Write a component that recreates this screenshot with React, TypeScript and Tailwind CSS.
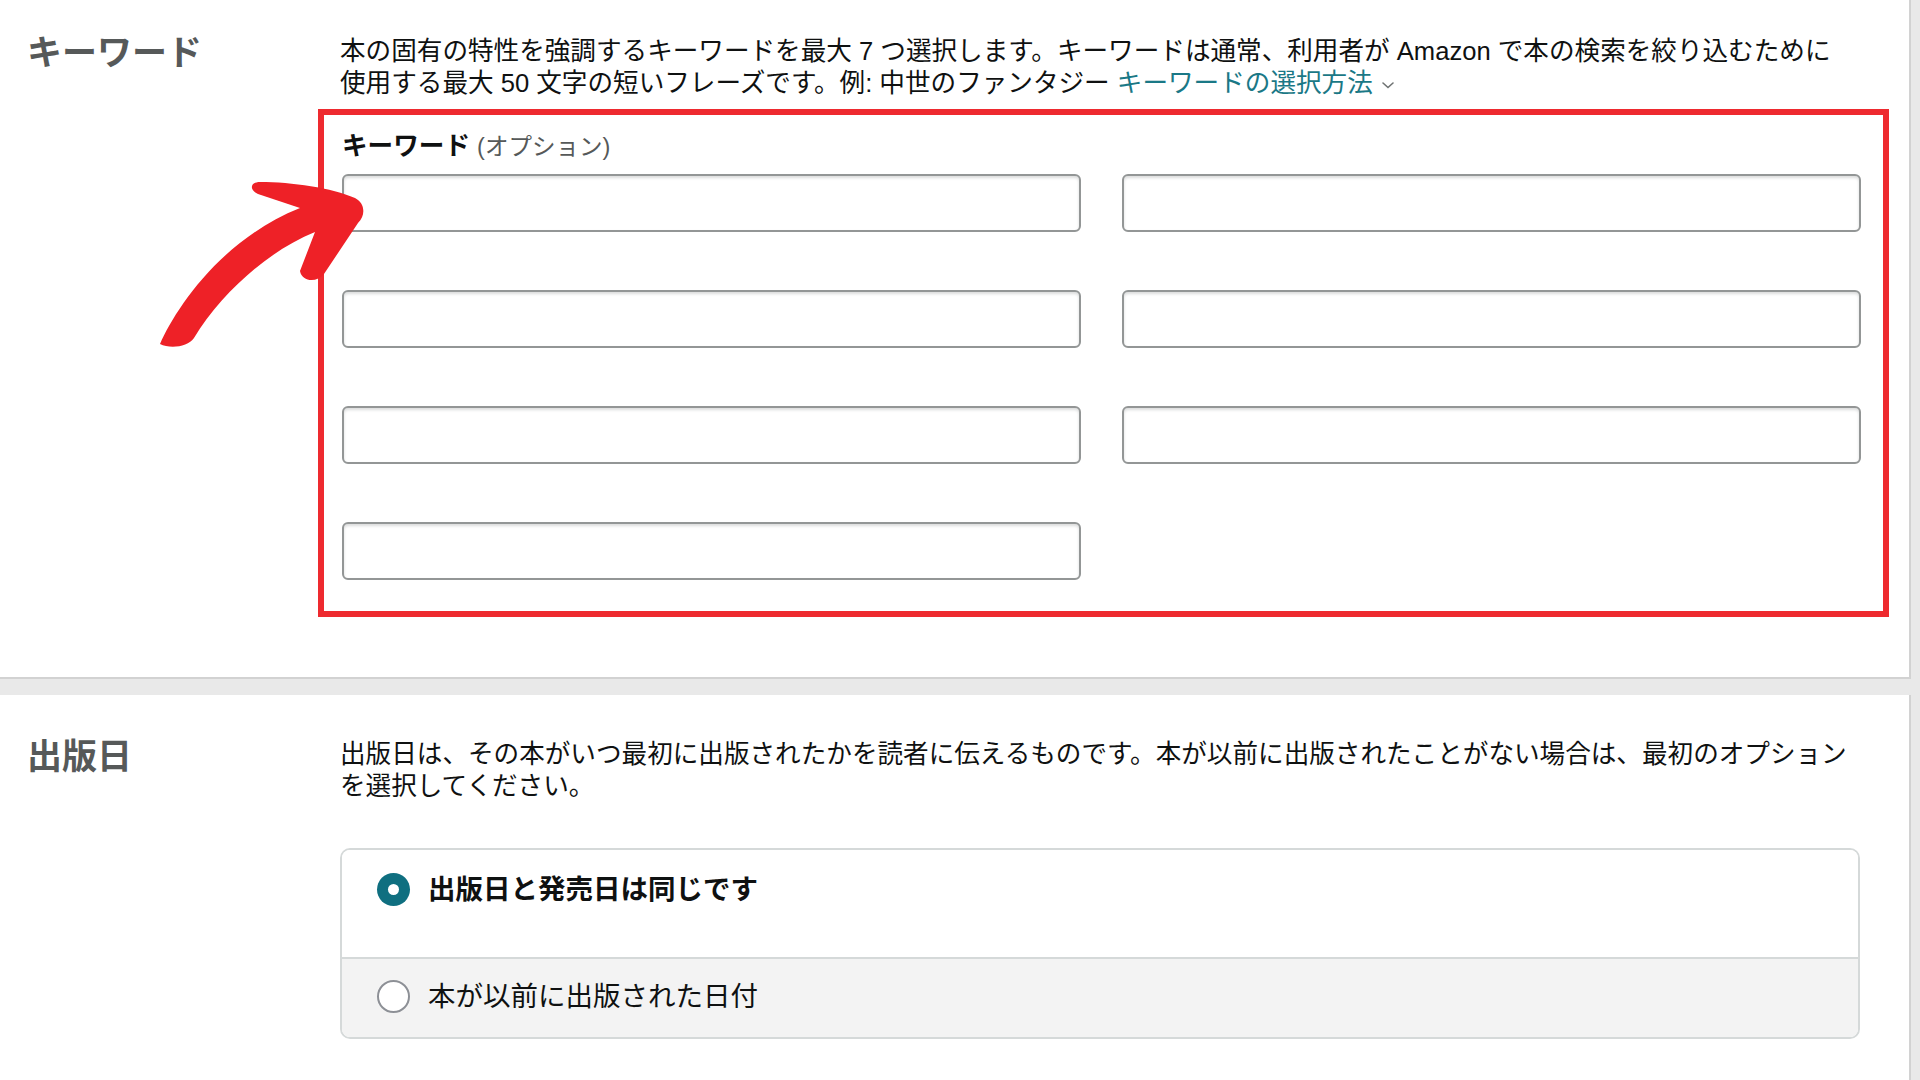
import React from "react";

const font = { fontFamily: '"Liberation Sans", "Noto Sans CJK JP", sans-serif' };

function Arrow() {
  // hand-drawn red annotation arrow pointing at the first keyword field
  return (
    <svg
      className="pointer-events-none absolute left-[150px] top-[170px]"
      width="230"
      height="190"
      viewBox="0 0 230 190"
    >
      <path
        fill="#ee2127"
        d="M 10 174 C 25 140, 70 70, 150 38 L 108 24 C 99 20, 100 12, 110 12 C 142 12, 182 18, 205 28 C 215 33, 216 45, 208 53 L 174 104 C 167 113, 152 112, 150 101 L 165 62 C 120 80, 72 122, 44 168 C 38 177, 20 179, 10 174 Z"
      />
    </svg>
  );
}

function KeywordInput() {
  return (
    <input
      type="text"
      className="h-[58px] w-full rounded-[6px] border-2 border-[#939696] bg-white px-3 shadow-[inset_0_2px_3px_rgba(15,17,17,0.15)] outline-none"
    />
  );
}

function Chevron() {
  return (
    <svg width="14" height="10" viewBox="0 0 14 10" className="ml-[8px] inline-block align-middle">
      <path d="M2 3 L7 7.5 L12 3" fill="none" stroke="#6f7373" strokeWidth="1.6" strokeLinecap="round" />
    </svg>
  );
}

function Radio({ checked }: { checked: boolean }) {
  return checked ? (
    <span className="flex h-[33px] w-[33px] shrink-0 items-center justify-center rounded-full bg-[#0f6f80]">
      <span className="h-[11px] w-[11px] rounded-full bg-white" />
    </span>
  ) : (
    <span className="h-[33px] w-[33px] shrink-0 rounded-full border-2 border-[#8d9096] bg-white" />
  );
}

export default function App() {
  return (
    <div className="relative min-h-screen w-full bg-[#e9e9e9]" style={font}>
      {/* Keywords section */}
      <section className="w-[1911px] border-b-2 border-r-2 border-[#d2d2d2] bg-white pb-[60px] pl-[27px] pt-[35px]">
        <div className="grid grid-cols-[313px_1522px]">
          <h2 className="-mt-[2px] text-[35px] font-bold leading-[40px] text-[#565959]">キーワード</h2>
          <div>
            <p className="w-[1510px] text-[25.6px] leading-[32px] text-[#0f1111]">
              本の固有の特性を強調するキーワードを最大 7 つ選択します。キーワードは通常、利用者が Amazon で本の検索を絞り込むために使用する最大 50 文字の短いフレーズです。例: 中世のファンタジー{" "}
              <a className="text-[#1a7886]">キーワードの選択方法</a>
              <Chevron />
            </p>

            <div className="-ml-[22px] -mr-[27px] mt-[10px] border-[6px] border-[#ee2a2f] pb-[31px] pl-[18px] pr-[22px] pt-[15px]">
              <label className="block text-[25.6px] leading-[32px] text-[#0f1111]">
                <span className="font-bold">キーワード</span>{" "}
                <span className="text-[23.5px] text-[#565959]">(オプション)</span>
              </label>
              <div className="mt-[11px] grid grid-cols-2 gap-x-[41px] gap-y-[58px]">
                {Array.from({ length: 7 }).map((_, i) => (
                  <KeywordInput key={i} />
                ))}
              </div>
            </div>
          </div>
        </div>
      </section>

      {/* Publication date section */}
      <section className="mt-[16px] min-h-[386px] w-[1911px] border-r-2 border-[#d2d2d2] bg-white pb-[40px] pl-[27px] pt-[43px]">
        <div className="grid grid-cols-[313px_1522px]">
          <h2 className="-mt-[1px] text-[35px] font-bold leading-[40px] text-[#565959]">出版日</h2>
          <div>
            <p className="w-[1510px] text-[25.6px] leading-[32px] text-[#0f1111]">
              出版日は、その本がいつ最初に出版されたかを読者に伝えるものです。本が以前に出版されたことがない場合は、最初のオプションを選択してください。
            </p>

            <div className="mt-[46px] w-[1520px] overflow-hidden rounded-[10px] border-2 border-[#d5d9d9]">
              <div className="flex h-[107px] items-start gap-[18px] bg-white pl-[35px] pt-[23px]">
                <Radio checked />
                <span className="text-[27.5px] font-bold leading-[33px] text-[#0f1111]">出版日と発売日は同じです</span>
              </div>
              <div className="flex h-[80px] items-start gap-[18px] border-t-2 border-[#d5d9d9] bg-[#f3f3f3] pl-[35px] pt-[21px]">
                <Radio checked={false} />
                <span className="text-[27.5px] leading-[33px] text-[#0f1111]">本が以前に出版された日付</span>
              </div>
            </div>
          </div>
        </div>
      </section>

      <Arrow />
    </div>
  );
}
